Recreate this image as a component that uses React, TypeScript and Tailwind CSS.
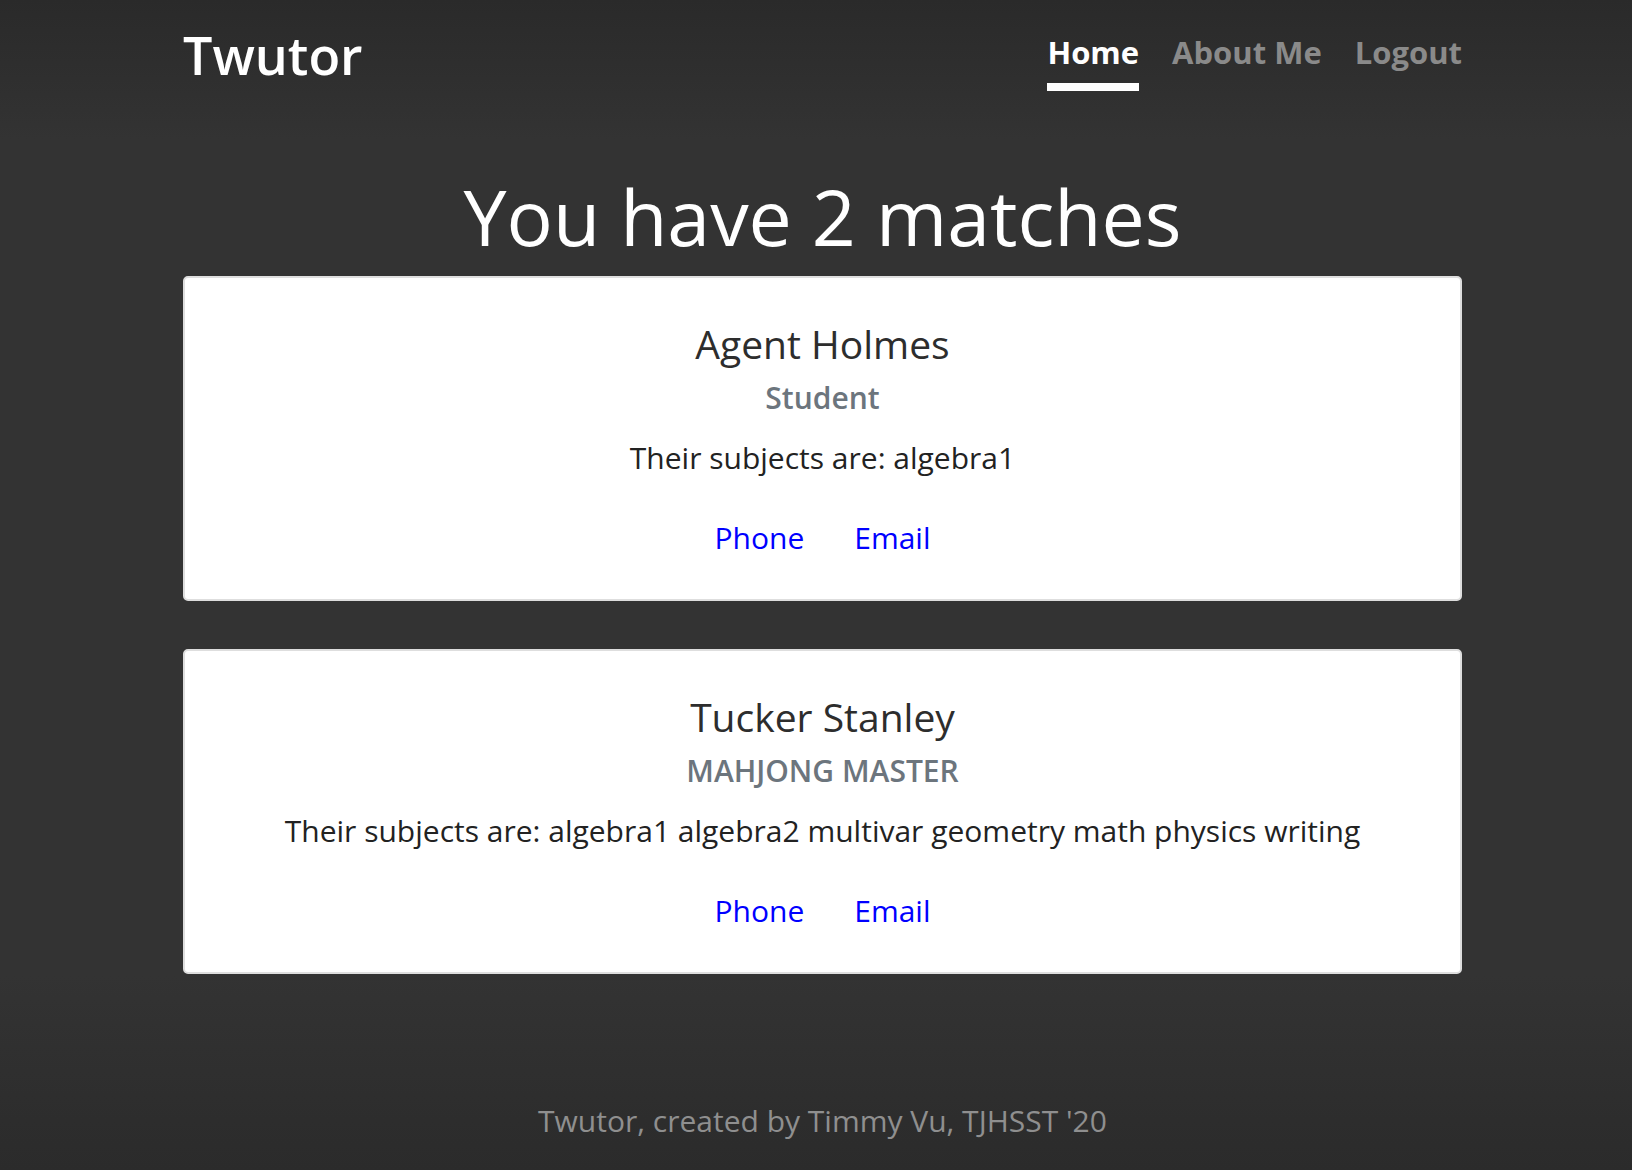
import React from "react";

const font = { fontFamily: '"Open Sans", "Noto Sans", sans-serif' };

function Card({ name, role, subjects }: { name: string; role: string; subjects: string }) {
  return (
    <div className="bg-white border-2 border-[#dedede] rounded-[5px] h-[325px] pt-[42px] flex flex-col items-center text-center">
      <div className="text-[39px] leading-[48px] font-medium text-[#2d2d2d]">{name}</div>
      <div className="mt-[10px] text-[30px] leading-[40px] font-semibold text-[#6c757d]">{role}</div>
      <div className="mt-[20px] text-[30px] leading-[40px] text-[#222]">{subjects}</div>
      <div className="mt-[40px] flex gap-[50px] text-[30px] leading-[40px] text-[#0000ff]">
        <a href="#">Phone</a>
        <a href="#">Email</a>
      </div>
    </div>
  );
}

export default function App() {
  return (
    <div className="min-h-[1170px] bg-[#333333] flex flex-col" style={font}>
      <div className="bg-gradient-to-b from-[#2a2a2a] to-[#333333] h-[140px]">
        <div className="ml-[183px] w-[1279px] flex justify-between items-start">
          <div className="mt-[23px] text-[52px] leading-[64px] font-semibold text-white">Twutor</div>
          <nav className="mt-[32px] flex gap-[33px] text-[31px] leading-[40px] font-bold">
            <div className="flex flex-col">
              <a href="#" className="text-white">Home</a>
              <div className="mt-[11px] h-[8px] bg-white" />
            </div>
            <a href="#" className="text-[#8a8a8a]">About Me</a>
            <a href="#" className="text-[#8a8a8a]">Logout</a>
          </nav>
        </div>
      </div>
      <main className="ml-[183px] w-[1279px] flex flex-col">
        <h1 className="mt-[29px] text-center text-[77px] leading-[96px] font-medium text-white">You have 2 matches</h1>
        <div className="mt-[11px] flex flex-col gap-[48px]">
          <Card name="Agent Holmes" role="Student" subjects="Their subjects are: algebra1" />
          <Card
            name="Tucker Stanley"
            role="MAHJONG MASTER"
            subjects="Their subjects are: algebra1 algebra2 multivar geometry math physics writing"
          />
        </div>
      </main>
      <footer className="mt-auto bg-gradient-to-b from-[#333333] to-[#2b2b2b] h-[196px] flex items-end justify-center pb-[29px]">
        <div className="ml-[13px] text-[30px] leading-[40px] text-[#8f8f8f]">Twutor, created by Timmy Vu, TJHSST '20</div>
      </footer>
    </div>
  );
}
